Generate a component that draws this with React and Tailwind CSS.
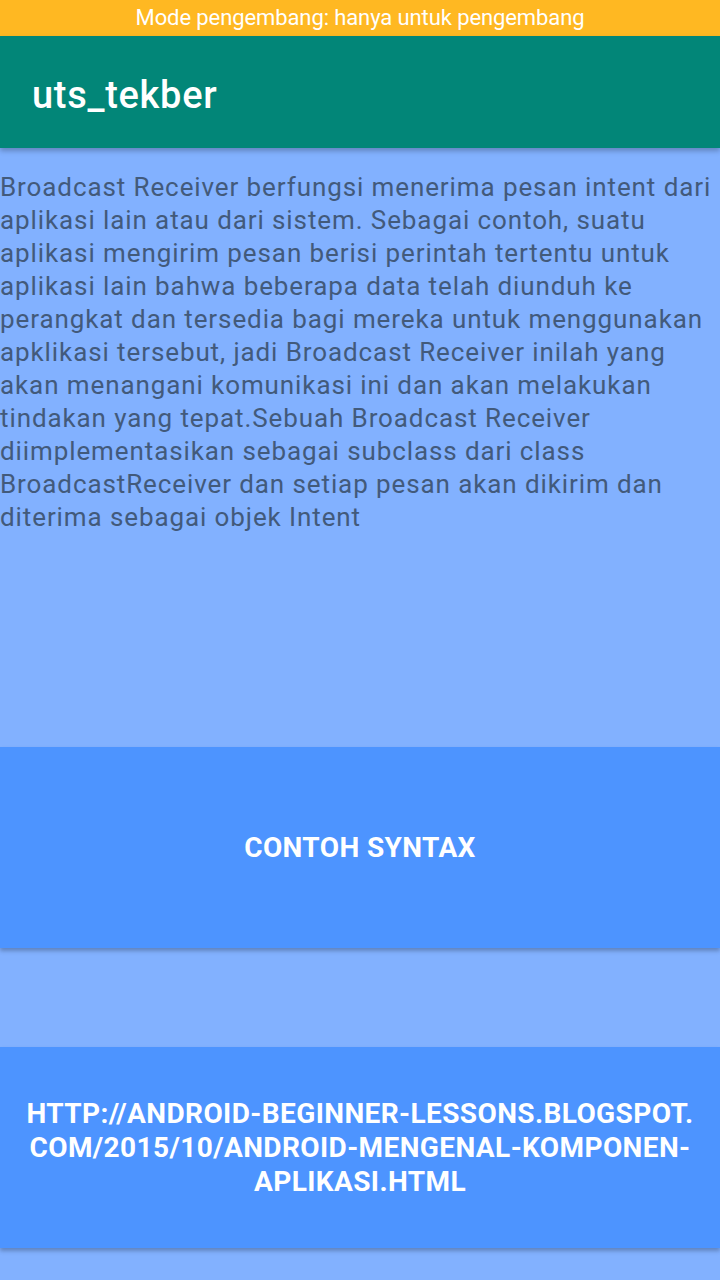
export default function App() {
  return (
    <div className="w-[720px] h-[1280px] overflow-hidden bg-[#82b1ff] flex flex-col" style={{ fontFamily: "Roboto, 'Noto Sans', sans-serif" }}>
      {/* status bar */}
      <div className="h-[36px] bg-[#ffb822] flex items-center justify-center text-white text-[22px] tracking-[-0.1px] leading-none">
        Mode pengembang: hanya untuk pengembang
      </div>
      {/* toolbar */}
      <div className="relative z-10 h-[112px] bg-[#028678] flex items-center px-[32px] pt-[6px] shadow-[0_3px_5px_rgba(0,0,0,0.25)]">
        <h1 className="text-white text-[38px] font-medium tracking-[0.7px]">uts_tekber</h1>
      </div>
      {/* content */}
      <div className="h-[599px]">
        <p className="pt-[23px] text-[26px] leading-[33px] text-[#425a7b] tracking-[0.9px]">
          Broadcast Receiver berfungsi menerima pesan intent dari aplikasi lain atau dari sistem. Sebagai contoh, suatu aplikasi mengirim pesan berisi perintah tertentu untuk aplikasi lain bahwa beberapa data telah diunduh ke perangkat dan tersedia bagi mereka untuk menggunakan apklikasi tersebut, jadi Broadcast Receiver inilah yang akan menangani komunikasi ini dan akan melakukan tindakan yang tepat.Sebuah Broadcast Receiver diimplementasikan sebagai subclass dari class BroadcastReceiver dan setiap pesan akan dikirim dan diterima sebagai objek Intent
        </p>
      </div>
      <button className="h-[201px] w-full bg-[#4d94ff] text-white font-bold text-[28px] tracking-[0.4px] uppercase shadow-[0_3px_4px_rgba(0,0,0,0.25)]">
        Contoh Syntax
      </button>
      <div className="h-[99px]" />
      <button className="h-[201px] w-full bg-[#4d94ff] text-white font-bold text-[28px] leading-[34px] tracking-[0.4px] uppercase shadow-[0_3px_4px_rgba(0,0,0,0.25)]">
        http://android-beginner-lessons.blogspot.
        <br />
        com/2015/10/android-mengenal-komponen-
        <br />
        aplikasi.html
      </button>
    </div>
  );
}
